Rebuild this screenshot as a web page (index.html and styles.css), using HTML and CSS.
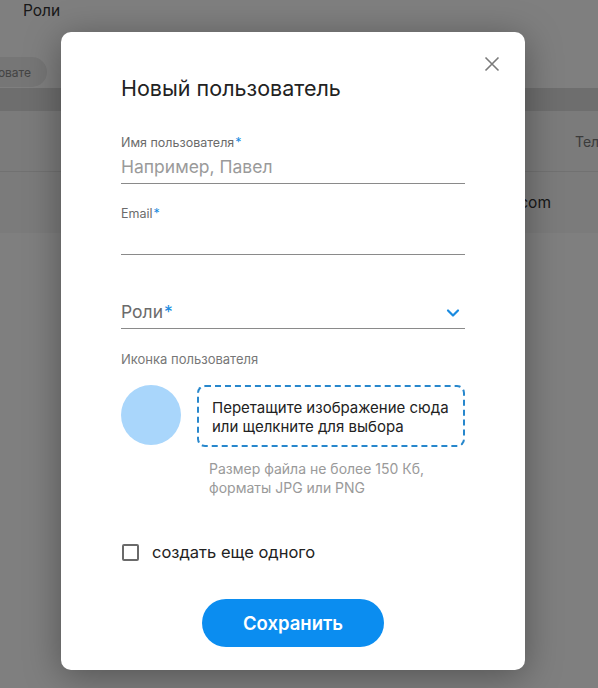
FILE: index.html
```html
<!DOCTYPE html>
<html lang="ru">
<head>
<meta charset="utf-8">
<title>Новый пользователь</title>
<link rel="stylesheet" href="styles.css">
</head>
<body>
<div class="page">
  <div class="topnav"><span class="nav-item">Роли</span></div>
  <div class="toolbar"><span class="pill">Добавить пользовате</span></div>
  <div class="band"></div>
  <div class="thead">
    <span class="cell c1"></span>
    <span class="cell c2"></span>
    <span class="cell c3">Телефон</span>
  </div>
  <div class="trow">
    <span class="cell c1"></span>
    <span class="cell c2 email">admin@example.com</span>
    <span class="cell c3"></span>
  </div>
</div>

<div class="overlay">
  <div class="modal">
    <button class="close" aria-label="Закрыть">
      <svg width="16" height="16" viewBox="0 0 16 16"><path d="M1.5 1.5 L14.5 14.5 M14.5 1.5 L1.5 14.5" stroke="#7a7a7a" stroke-width="1.6" fill="none"/></svg>
    </button>
    <h1 class="title">Новый пользователь</h1>

    <div class="field">
      <label class="label">Имя пользователя<span class="req">*</span></label>
      <div class="input placeholder">Например, Павел</div>
    </div>

    <div class="field">
      <label class="label">Email<span class="req">*</span></label>
      <div class="input"></div>
    </div>

    <div class="field select-field">
      <div class="input select">
        <span class="select-text">Роли<span class="req">*</span></span>
        <svg class="chev" width="14" height="10" viewBox="0 0 14 10"><path d="M2 2.5 L7 7.5 L12 2.5" stroke="#1a8be0" stroke-width="2.2" fill="none" stroke-linecap="round" stroke-linejoin="round"/></svg>
      </div>
    </div>

    <div class="field icon-field">
      <div class="label">Иконка пользователя</div>
      <div class="upload">
        <div class="avatar"></div>
        <div class="upload-col">
          <div class="dropzone">Перетащите изображение сюда<br>или щелкните для выбора</div>
          <div class="hint">Размер файла не более 150 Кб,<br>форматы JPG или PNG</div>
        </div>
      </div>
    </div>

    <label class="check">
      <span class="box"></span>
      <span class="check-text">создать еще одного</span>
    </label>

    <div class="actions">
      <button class="save">Сохранить</button>
    </div>
  </div>
</div>
</body>
</html>
```

FILE: styles.css
```css
* { box-sizing: border-box; }
html, body { margin: 0; padding: 0; }
body {
  font-family: Inter, "Noto Sans", sans-serif;
  background: #ffffff;
  width: 598px;
  height: 688px;
  overflow: hidden;
  position: relative;
}

/* background page */
.page { width: 598px; overflow: hidden; }
.topnav {
  height: 20px;
  padding-left: 23px;
  display: flex;
  align-items: center;
}
.nav-item { font-size: 15.5px; color: #333; }
.toolbar {
  height: 68px;
  padding-top: 37px;
  display: flex;
}
.pill {
  margin-left: -90px;
  height: 30px;
  width: 137px;
  border-radius: 15px;
  background: #ececec;
  font-size: 12px;
  color: #888;
  display: flex;
  align-items: center;
  justify-content: flex-end;
  padding-right: 16px;
  white-space: nowrap;
  overflow: hidden;
}
.band { height: 23px; background: #dcdcdc; }
.thead, .trow {
  display: flex;
  height: 61px;
  align-items: center;
  background: #f6f6f6;
  border-bottom: 1px solid #e2e2e2;
}
.trow { height: 61px; border-bottom: none; }
.cell { white-space: nowrap; }
.c1 { width: 380px; flex: none; }
.c2 { width: 195px; flex: none; font-size: 15.5px; color: #333; }
.email { text-align: right; padding-right: 24px; }
.c3 { font-size: 14px; color: #777; overflow: hidden; }

/* overlay */
.overlay {
  position: absolute;
  inset: 0;
  background: rgba(0,0,0,0.5);
  padding: 32px 0 0 61px;
}
.modal {
  position: relative;
  width: 464px;
  height: 638px;
  background: #fff;
  border-radius: 10px;
  padding: 44px 60px 0 60px;
  box-shadow: 0 6px 36px rgba(0,0,0,0.35);
  font-family: Inter, "Noto Sans", sans-serif;
}
.close {
  position: absolute;
  top: 24px;
  right: 25px;
  width: 16px;
  height: 16px;
  padding: 0;
  border: 0;
  background: none;
  display: block;
}
.close svg { display: block; }
.title {
  margin: 0;
  font-size: 21.5px;
  line-height: 24px;
  font-weight: 400;
  color: #222;
}
.field { margin-top: 22px; }
.field:first-of-type { margin-top: 35px; }
.label {
  display: block;
  font-size: 12.5px;
  line-height: 16px;
  color: #6b6b6b;
}
.req { color: #1a8be0; margin-left: 1px; }
.input {
  height: 33px;
  padding-top: 6px;
  font-size: 17.5px;
  line-height: 20px;
  color: #333;
  border-bottom: 1px solid #8a8a8a;
}
.placeholder { color: #9a9a9a; }
.select-field { margin-top: 25px; }
.select {
  height: 49px;
  padding-top: 22px;
  display: flex;
  justify-content: space-between;
  align-items: flex-start;
  color: #6b6b6b;
}
.chev { margin-top: 6px; margin-right: 5px; }
.icon-field { margin-top: 22px; }
.icon-field .label { color: #777; font-size: 13px; }
.upload {
  display: flex;
  gap: 16px;
  margin-top: 18px;
}
.avatar {
  width: 60px;
  height: 60px;
  border-radius: 50%;
  background: #a9d6fb;
  flex: none;
}
.upload-col { width: 268px; }
.dropzone {
  height: 62px;
  border: 2px dashed #2787cc;
  border-radius: 8px;
  padding: 11px 10px 0 13px;
  font-size: 15px;
  line-height: 19px;
  color: #222;
  white-space: nowrap;
}
.hint {
  margin-top: 12px;
  padding-left: 12px;
  font-size: 14px;
  line-height: 19px;
  color: #9a9a9a;
}
.check {
  display: flex;
  align-items: center;
  gap: 13px;
  margin-top: 45px;
  height: 20px;
  padding-left: 1px;
}
.box {
  width: 17px;
  height: 17px;
  border: 2px solid #6a6a6a;
  border-radius: 2px;
  flex: none;
}
.check-text { font-size: 16.5px; color: #222; }
.actions {
  display: flex;
  justify-content: center;
  margin-top: 37px;
}
.save {
  width: 182px;
  height: 48px;
  border: 0;
  border-radius: 24px;
  background: #0b8df0;
  color: #fff;
  font-family: Inter, "Noto Sans", sans-serif;
  font-size: 18.5px;
  font-weight: 600;
}
```
